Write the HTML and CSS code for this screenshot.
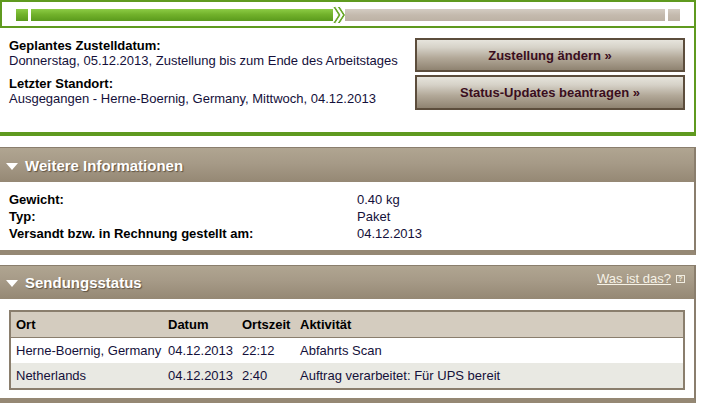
FILE: index.html
```html
<!DOCTYPE html>
<html lang="de">
<head>
<meta charset="utf-8">
<title>Sendungsverfolgung</title>
<link rel="stylesheet" href="styles.css">
</head>
<body>
<div class="page">
  <div class="tracker">
    <div class="progress">
      <span class="seg seg-done seg-start"></span>
      <span class="seg seg-done seg-main"></span>
      <svg class="chev" width="14" height="18" viewBox="0 0 14 18">
        <path d="M0.5 0.5 L6 9 L0.5 17.5 L3.5 17.5 L9 9 L3.5 0.5 Z" fill="#6aa82a" stroke="#ffffff" stroke-width="1"/>
        <path d="M5 0.5 L10.5 9 L5 17.5 L8 17.5 L13.5 9 L8 0.5 Z" fill="#6aa82a" stroke="#ffffff" stroke-width="1"/>
      </svg>
      <span class="seg seg-todo seg-rest"></span>
      <span class="seg seg-todo seg-end"></span>
    </div>
  </div>

  <div class="summary">
    <div class="facts">
      <div class="fact">
        <div class="label">Geplantes Zustelldatum:</div>
        <div class="value">Donnerstag, 05.12.2013, Zustellung bis zum Ende des Arbeitstages</div>
      </div>
      <div class="fact">
        <div class="label">Letzter Standort:</div>
        <div class="value">Ausgegangen - Herne-Boernig, Germany, Mittwoch, 04.12.2013</div>
      </div>
    </div>
    <div class="actions">
      <a class="btn" href="#">Zustellung ändern »</a>
      <a class="btn btn-tall" href="#">Status-Updates beantragen »</a>
    </div>
  </div>

  <section class="panel panel-info">
    <div class="panel-head">
      <span class="tri"></span>
      <h2>Weitere Informationen</h2>
    </div>
    <div class="panel-body info-body">
      <dl class="info">
        <dt>Gewicht:</dt><dd>0.40 kg</dd>
        <dt>Typ:</dt><dd>Paket</dd>
        <dt>Versandt bzw. in Rechnung gestellt am:</dt><dd>04.12.2013</dd>
      </dl>
    </div>
  </section>

  <section class="panel panel-status">
    <div class="panel-head">
      <span class="tri"></span>
      <h2>Sendungsstatus</h2>
      <a class="help" href="#">Was ist das?</a>
      <span class="help-icon">?</span>
    </div>
    <div class="panel-body status-body">
      <table class="status">
        <thead>
          <tr><th class="c-ort">Ort</th><th class="c-datum">Datum</th><th class="c-zeit">Ortszeit</th><th>Aktivität</th></tr>
        </thead>
        <tbody>
          <tr><td>Herne-Boernig, Germany</td><td>04.12.2013</td><td>22:12</td><td>Abfahrts Scan</td></tr>
          <tr class="alt"><td>Netherlands</td><td>04.12.2013</td><td>2:40</td><td>Auftrag verarbeitet: Für UPS bereit</td></tr>
        </tbody>
      </table>
    </div>
  </section>
</div>
</body>
</html>
```

FILE: styles.css
```css
* { box-sizing: border-box; }

body {
  margin: 0;
  background: #ffffff;
  font-family: "Liberation Sans", Arial, sans-serif;
  font-size: 13px;
  color: #000000;
}

.page {
  width: 696px;
}

/* ---------- tracker ---------- */
.tracker {
  height: 28px;
  border: 2px solid #5f9a1f;
  padding: 7px 0 0 14px;
}

.progress {
  display: flex;
  align-items: center;
  height: 12px;
}

.seg {
  display: block;
  height: 12px;
}

.seg-done {
  background: linear-gradient(#8ccc44 0%, #72b22c 45%, #5a9a1c 100%);
}

.seg-todo {
  background: linear-gradient(#d4ccc2 0%, #c4baae 50%, #bdb2a5 100%);
}

.seg-start { width: 12px; }
.seg-main { width: 302px; margin-left: 3px; }

.chev {
  display: block;
  margin-left: -1px;
  margin-right: -1px;
  flex: none;
}

.seg-rest { width: 320px; }
.seg-end { width: 12px; margin-left: 3px; }

/* ---------- summary ---------- */
.summary {
  display: flex;
  justify-content: space-between;
  border-right: 2px solid #5f9a1f;
  border-bottom: 4px solid #5f9a1f;
  padding: 10px 9px 0 9px;
  height: 108px;
}

.facts {
  display: flex;
  flex-direction: column;
  gap: 7px;
}

.label {
  font-weight: bold;
  line-height: 15px;
}

.value {
  color: #14103a;
  line-height: 16px;
}

.actions {
  display: flex;
  flex-direction: column;
  gap: 3px;
  width: 270px;
}

.btn {
  display: flex;
  align-items: center;
  justify-content: center;
  height: 34px;
  border: 2px solid #5c4d3c;
  background: linear-gradient(#e6e4dc 0%, #d6d2c8 25%, #b2a898 60%, #8f8371 100%);
  color: #3a0d1d;
  font-weight: bold;
  font-size: 13px;
  text-decoration: none;
}

.btn-tall { height: 35px; }

/* ---------- panels ---------- */
.panel {
  margin-top: 11px;
}

.panel-status { margin-top: 10px; }

.panel-head {
  display: flex;
  align-items: center;
  height: 35px;
  padding-left: 6px;
  border-top: 1px solid #8a7e6d;
  border-right: 2px solid #8a7e6d;
  background: linear-gradient(#b0a591 0%, #a69a87 45%, #958874 100%);
}

.panel-status .panel-head { height: 34px; }

.tri {
  width: 0;
  height: 0;
  border-left: 6px solid transparent;
  border-right: 6px solid transparent;
  border-top: 7px solid #ffffff;
  margin-right: 7px;
  margin-top: 2px;
}

.panel-head h2 {
  margin: 0;
  font-size: 15px;
  font-weight: bold;
  color: #ffffff;
  text-shadow: 1px 1px 1px #5e5242;
}

.help {
  margin-left: auto;
  margin-top: -8px;
  color: #f6f2e6;
  font-size: 13px;
  text-decoration: underline;
}

.help-icon {
  width: 9px;
  height: 8px;
  margin: -8px 9px 0 5px;
  border: 1px solid #f0ece0;
  color: #f0ece0;
  font-size: 7px;
  line-height: 6px;
  text-align: center;
  font-weight: bold;
}

.panel-body {
  border-right: 2px solid #8a7e6d;
  border-bottom: 5px solid #958874;
}

.info-body {
  padding: 9px;
  height: 73px;
}

.info {
  margin: 0;
  display: grid;
  grid-template-columns: 348px 1fr;
  line-height: 17px;
}

.info dt {
  font-weight: bold;
}

.info dd {
  margin: 0;
  color: #14103a;
}

.status-body {
  padding: 11px 9px 8px 9px;
  height: 104px;
}

.status {
  width: 100%;
  border-collapse: collapse;
  border: 2px solid #8a7e6d;
}

.status th {
  background: #d4ccbf;
  text-align: left;
  font-weight: bold;
  height: 26px;
  padding: 0 0 0 5px;
  border-bottom: 1px solid #8a7e6d;
}

.status td {
  height: 26px;
  padding: 0 0 0 5px;
  color: #14103a;
  white-space: nowrap;
}

.status tr.alt td {
  background: #e9e9e3;
}

.c-ort { width: 153px; }
.c-datum { width: 74px; }
.c-zeit { width: 58px; }
```
